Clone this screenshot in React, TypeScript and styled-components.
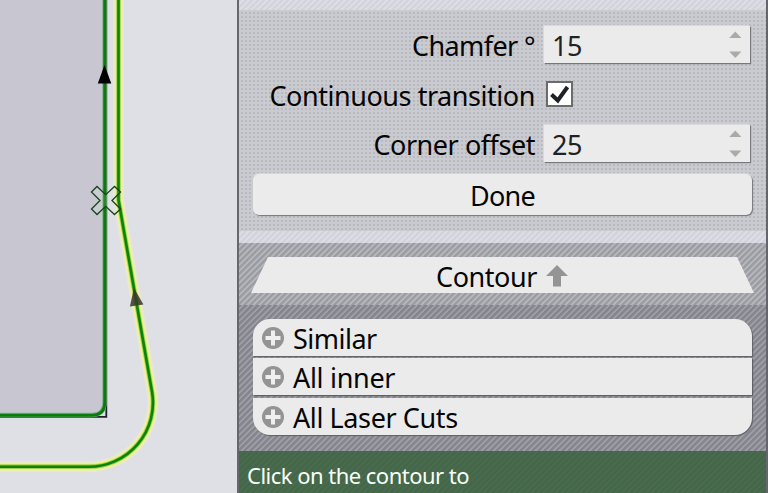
import React from "react";
import styled, { createGlobalStyle, css } from "styled-components";

const GlobalStyle = createGlobalStyle`
  * { box-sizing: border-box; }
  body { margin: 0; overflow: hidden; background: #dfe0e6; }
`;

const stripes = (dark: string, light: string) => css`
  background-image: repeating-linear-gradient(
    135deg,
    ${dark} 0 1.7px,
    ${light} 2.5px 3.5px,
    ${dark} 4.243px
  );
`;

const Screen = styled.div`
  display: grid;
  grid-template-columns: 237px 531px;
  width: 768px;
  height: 493px;
  overflow: hidden;
  font-family: "Noto Sans", "Open Sans", sans-serif;
  font-size: 27px;
  line-height: 36px;
  color: #050505;
  white-space: nowrap;
`;

const Drawing = styled.svg`
  display: block;
  width: 237px;
  height: 493px;
`;

const Panel = styled.div`
  display: flex;
  flex-direction: column;
  border-left: 2px solid #65676f;
  border-right: 2px solid #65666d;
`;

const Strip = styled.div<{ $height: number }>`
  height: ${(p) => p.$height}px;
  ${stripes("#d3d3dd", "#dddee6")}
`;

const Settings = styled.section`
  height: 221px;
  padding: 16px 14px 0;
  background-color: #cacbd0;
  background-image: conic-gradient(from 0deg, transparent 25%, #b8b9be 0 50%, transparent 0);
  background-size: 4px 4px;
`;

const FieldRow = styled.div<{ $height: number }>`
  display: grid;
  grid-template-columns: 282px 1fr;
  column-gap: 9px;
  align-items: start;
  height: ${(p) => p.$height}px;
`;

const Text = styled.span<{ $tracking?: number; $drop?: number }>`
  letter-spacing: ${(p) => p.$tracking ?? -0.45}px;
  margin-top: ${(p) => p.$drop ?? 0}px;
  line-height: 36px;
`;

const Label = styled(Text)`
  justify-self: end;
`;

const NumberField = styled.div`
  display: flex;
  justify-content: space-between;
  width: 206px;
  height: 37px;
  padding: 0 8px;
  background: #ebebeb;
  color: #222;
  box-shadow: 1px 1px 1px #77777c, -1px -1px 1px #d9d9de;
`;

const Spinner = styled.svg`
  width: 13px;
  height: 37px;
`;

const CheckBox = styled.div`
  display: flex;
  width: 27px;
  height: 26px;
  margin-left: 2px;
  border: 2px solid #6b6b6b;
  background: #fff;
`;

const DoneButton = styled.button`
  display: flex;
  justify-content: center;
  width: 499px;
  height: 41px;
  padding: 0;
  border: 0;
  border-radius: 6px;
  background: #ebebeb;
  color: inherit;
  font: inherit;
  box-shadow: 1px 1px 1px #74757a, 0 -1px 1px #d8d8dd;
`;

const ContourSection = styled.section`
  display: flex;
  justify-content: center;
  height: 62px;
  padding-top: 14px;
  ${stripes("#9c9da3", "#b7b8be")}
`;

const ContourTab = styled.div`
  display: flex;
  justify-content: center;
  gap: 9px;
  width: 503px;
  height: 36px;
  padding-right: 1px;
  background: #ebebeb;
  clip-path: polygon(17px 0, 486px 0, 100% 100%, 0 100%);
`;

const UpArrow = styled.svg`
  width: 22px;
  height: 22px;
  margin-top: 8px;
`;

const ListSection = styled.section`
  height: 146px;
  padding: 14px 14px 0;
  ${stripes("#85868d", "#9fa0a7")}
`;

const List = styled.div`
  display: grid;
  grid-template-rows: 37px 37px 37px;
  row-gap: 2.25px;
`;

const ListItem = styled.div`
  display: flex;
  gap: 9px;
  width: 499px;
  padding-left: 9px;
  background: #ebebeb;
  box-shadow: 1px 1px 1px #606168;
  &:first-child { border-radius: 17px 17px 0 0; }
  &:last-child { border-radius: 0 0 17px 17px; }
`;

const PlusIcon = styled.svg`
  width: 22px;
  height: 22px;
  margin-top: 8px;
`;

const Status = styled.footer`
  display: flex;
  height: 42px;
  padding: 6px 8px 0;
  color: #f8fff8;
  font-size: 22px;
  ${stripes("#45664a", "#496d4c")}
`;

function ToolPath() {
  const outer = "M118.5-5V200L152.1 392.3A64 64 0 0 1 89 466.7H-5";
  return (
    <Drawing viewBox="0 0 237 493">
      <path fill="#dfe0e6" d="M0 0h237v493H0z" />
      <path fill="#c8c7d1" d="M0 0h105v405q0 11-11 11H0z" />
      <path fill="none" stroke="#222029" strokeWidth="1.8" d="M106.3-5V416.8H-5" />
      <path fill="none" stroke="#84ae8c" strokeWidth="4.5" d="M104.5-5V402q0 13-13 13H-5" />
      <path fill="none" stroke="#087d0c" strokeWidth="3" d="M104.8-5V402q0 13-13 13.3H-5" />
      <g fill="none">
        <path stroke="#eeeebf" strokeWidth="11" strokeOpacity=".55" d={outer} />
        <path stroke="#f0f0a4" strokeWidth="8" d={outer} />
        <path stroke="#e6ee70" strokeWidth="5.8" d={outer} />
        <path stroke="#8cc64a" strokeWidth="4.2" d={outer} />
        <path stroke="#08830c" strokeWidth="2.6" d={outer} />
      </g>
      <path fill="#000" d="M104.5 65l6.8 18.6H97.8z" />
      <path fill="#39392d" fillOpacity=".87" d="M134 288l9.4 16.5-13.5 2z" />
      <path
        fill="#e5edda"
        fillOpacity=".12"
        stroke="#16451d"
        strokeWidth="1.3"
        d="M91.5 192l5.5-5.5 8.7 8.2 8.8-8.2 6 5.5-8.5 8.5 8.5 8.5-6 5.5-8.8-8.2-8.7 8.2-5.5-5.5 8.5-8.5z"
      />
    </Drawing>
  );
}

function NumberInput({ value }: { value: string }) {
  return (
    <NumberField>
      <Text $drop={2}>{value}</Text>
      <Spinner viewBox="0 0 13 37">
        <path fill="#aaa" d="M.2 12L6.3 5.5 12.4 12zM.2 25.5h12.2L6.3 32z" />
      </Spinner>
    </NumberField>
  );
}

const choices = [
  { label: "Similar", tracking: -0.5 },
  { label: "All inner", tracking: -0.3 },
  { label: "All Laser Cuts", tracking: -0.4 },
];

export default function App() {
  return (
    <>
      <GlobalStyle />
      <Screen>
        <ToolPath />
        <Panel>
          <Strip $height={10} />
          <Settings>
            <FieldRow $height={55}>
              <Label $tracking={-0.6} $drop={2}>Chamfer °</Label>
              <NumberInput value="15" />
            </FieldRow>
            <FieldRow $height={44}>
              <Label $drop={-3}>Continuous transition</Label>
              <CheckBox>
                <svg width="23" height="22" viewBox="0 0 23 22">
                  <path fill="none" stroke="#202124" strokeWidth="4" d="M3.5 11.5l6.3 6L19.5 4" />
                </svg>
              </CheckBox>
            </FieldRow>
            <FieldRow $height={49}>
              <Label $drop={2}>Corner offset</Label>
              <NumberInput value="25" />
            </FieldRow>
            <DoneButton><Text $tracking={-0.7} $drop={4}>Done</Text></DoneButton>
          </Settings>
          <Strip $height={12} />
          <ContourSection>
            <ContourTab>
              <Text $drop={2}>Contour</Text>
              <UpArrow viewBox="0 0 22 22">
                <path fill="#949494" d="M11 0l11 11h-7v10.5H7V11H0z" />
              </UpArrow>
            </ContourTab>
          </ContourSection>
          <ListSection>
            <List>
              {choices.map((c) => (
                <ListItem key={c.label}>
                  <PlusIcon viewBox="0 0 22 22">
                    <circle cx="11" cy="11" r="11" fill="#949494" />
                    <path fill="none" stroke="#efefef" strokeWidth="4" d="M11 3.5v15M3.5 11h15" />
                  </PlusIcon>
                  <Text $tracking={c.tracking} $drop={2}>{c.label}</Text>
                </ListItem>
              ))}
            </List>
          </ListSection>
          <Status><Text $tracking={-0.52}>Click on the contour to</Text></Status>
        </Panel>
      </Screen>
    </>
  );
}
